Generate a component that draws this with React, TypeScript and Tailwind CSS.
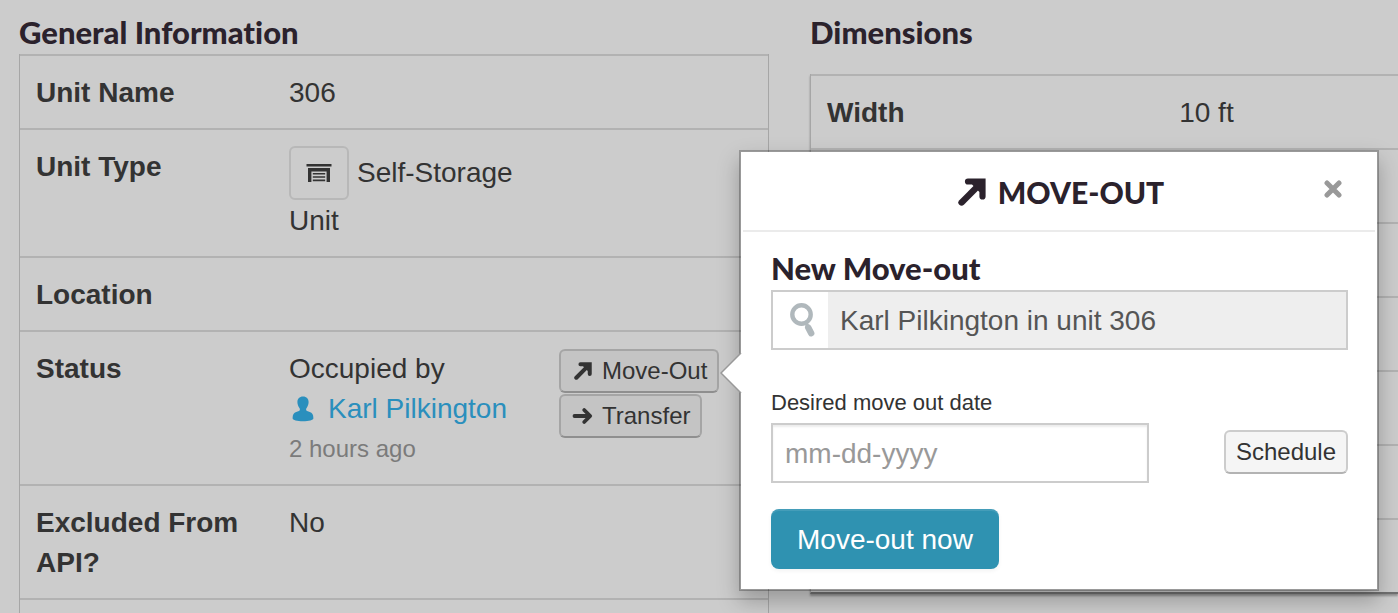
import type { ReactNode } from "react";
import { clsx } from "clsx";

/* Icons */

function ArrowUpRight({ className }: { className?: string }) {
  return (
    <svg viewBox="0 0 28 28" className={className} fill="currentColor" aria-hidden="true">
      <path
        d="M3.600 24.400 L20 8"
        stroke="currentColor"
        strokeWidth="6.400"
        strokeLinecap="round"
        fill="none"
      />
      <path d="M10 .4 H27.600 V18.500 a3.100 3.100 0 0 1 -6.200 0 V14 L14 6.600 H10 a3.100 3.100 0 0 1 0 -6.200z" />
    </svg>
  );
}

function ArrowRight({ className }: { className?: string }) {
  return (
    <svg
      viewBox="0 0 24 24"
      className={className}
      fill="none"
      stroke="currentColor"
      strokeWidth="3.8"
      strokeLinecap="round"
      strokeLinejoin="round"
      aria-hidden="true"
    >
      <path d="M3.500 12 H18 M13.200 6 L19.200 12 L13.200 18" />
    </svg>
  );
}

function UserIcon({ className }: { className?: string }) {
  return (
    <svg viewBox="0 0 22 26" className={className} fill="currentColor" aria-hidden="true">
      <path d="M11 .5c3.600 0 5.600 2.300 5.600 5.600 0 2.600-.9 4.400-2 5.800-.7.900-.8 2.600.5 3.100l2.700.9c2.300.8 3.600 2.600 3.600 6.300 0 1.800-4.600 3-10.400 3S.6 24 .6 22.200c0-3.700 1.300-5.500 3.600-6.300l2.700-.9c1.300-.5 1.200-2.200.5-3.100-1.100-1.400-2-3.200-2-5.800C5.400 2.800 7.400.5 11 .5z" />
    </svg>
  );
}

function GarageIcon({ className }: { className?: string }) {
  return (
    <svg viewBox="0 0 26 20" className={className} fill="currentColor" aria-hidden="true">
      <path d="M.5 1h25v2.500H.5z" />
      <path d="M2 5h22v14h-3.400V8.500H5.400V19H2z" />
      <path d="M6.800 10h12.400v1.600H6.800zM6.800 13.200h12.400v1.600H6.800zM6.800 16.600h12.400v1.600H6.800z" />
    </svg>
  );
}

function SearchIcon({ className }: { className?: string }) {
  return (
    <svg
      viewBox="0 0 26 34"
      className={className}
      fill="none"
      stroke="currentColor"
      strokeLinecap="round"
      aria-hidden="true"
    >
      <circle cx="11.500" cy="11.500" r="9.200" strokeWidth="4.400" />
      <path d="M18.200 24.500 L21.200 30.200" strokeWidth="6.400" />
      <path d="M16 20 L18 24" strokeWidth="3.400" />
    </svg>
  );
}

function CloseIcon({ className }: { className?: string }) {
  return (
    <svg
      viewBox="0 0 18 18"
      className={className}
      stroke="currentColor"
      strokeWidth="5"
      strokeLinecap="round"
      aria-hidden="true"
    >
      <path d="M3 3 L15 15 M15 3 L3 15" />
    </svg>
  );
}

/* Building blocks */

const headingFont =
  "font-['Lato',sans-serif] font-black text-[#2b222c] [font-variant-ligatures:none]";
const cell = "border-t-2 border-[#b2b2b2] px-4 pt-[17px] pb-[15px]";

interface SmallButtonProps {
  children: ReactNode;
  dimmed?: boolean;
}

function SmallButton({ children, dimmed }: SmallButtonProps) {
  return (
    <button
      type="button"
      className={clsx(
        "inline-flex h-11 items-center gap-[7px] rounded-md border-2 px-2.5 text-2xl leading-none whitespace-nowrap text-[#333]",
        dimmed
          ? "border-[#a5a5a5] border-b-[#8f8f8f] bg-[#c4c4c4]"
          : "border-[#ccc] border-b-[#b3b3b3] bg-[#f5f5f5]"
      )}
    >
      {children}
    </button>
  );
}

interface RowProps {
  label: string;
  children?: ReactNode;
  actions?: ReactNode;
}

function InfoRow({ label, children, actions }: RowProps) {
  return (
    <tr className="align-top">
      <th scope="row" className={clsx(cell, "text-left font-bold")}>
        {label}
      </th>
      <td className={cell}>{children}</td>
      <td className={cell}>{actions}</td>
    </tr>
  );
}

function MoveOutPopover() {
  return (
    <div
      role="dialog"
      aria-labelledby="move-out-title"
      className="absolute -top-[199px] left-[180px] z-10 w-[640px] border-2 border-black/25 bg-white bg-clip-padding px-0.5 shadow-[0_10px_20px_rgba(0,0,0,0.25)]"
    >
      {/* Pointer towards the button */}
      <svg
        viewBox="0 0 22 42"
        className="absolute top-[200px] -left-[21px] h-[42px] w-[22px]"
        aria-hidden="true"
      >
        <path d="M22 0 L1 21 L22 42z" fill="#fff" />
        <path d="M21 1 L1 21 L21 41" fill="none" stroke="#999" strokeWidth="1.500" />
      </svg>

      <div className="relative flex h-20 items-center justify-center gap-3 border-b-2 border-[#ebebeb] pt-px pl-1">
        <ArrowUpRight className="h-7 w-7 text-[#2b222c]" />
        <h2 id="move-out-title" className={clsx(headingFont, "text-3xl leading-10")}>
          MOVE-OUT
        </h2>
        <button type="button" aria-label="Close" className="absolute top-7 right-[33px] text-[#999]">
          <CloseIcon className="h-[18px] w-[18px]" />
        </button>
      </div>

      <form className="pt-4 pr-[27px] pb-5 pl-7">
        <h3 className={clsx(headingFont, "pb-0.5 text-[31px] leading-10")}>New Move-out</h3>
        <div className="flex h-[60px] border-2 border-[#ccc] bg-[#eee]">
          <div className="flex w-[55px] items-center justify-center bg-white pl-1">
            <SearchIcon className="h-[34px] w-[26px] text-[#b0b8bc]" />
          </div>
          <input
            type="text"
            readOnly
            aria-label="Lease"
            defaultValue="Karl Pilkington in unit 306"
            className="min-w-0 flex-1 bg-transparent px-3 pt-0.5 text-[#555] outline-none"
          />
        </div>

        <label htmlFor="move-out-date" className="mt-[37px] block text-[22px] leading-8">
          Desired move out date
        </label>
        <div className="mt-1 flex items-start justify-between">
          <input
            id="move-out-date"
            type="text"
            placeholder="mm-dd-yyyy"
            className="h-[60px] w-[378px] border-2 border-[#ccc] bg-white px-3 pt-0.5 shadow-[inset_0_2px_2px_rgba(0,0,0,0.075)] outline-none placeholder:text-[#999]"
          />
          <div className="flex pt-[7px]">
            <SmallButton>Schedule</SmallButton>
          </div>
        </div>

        <button
          type="button"
          className="mt-[26px] block h-[60px] rounded-lg bg-[#2f92b1] px-[26px] pt-0.5 text-white shadow-[inset_0_2px_0_rgba(255,255,255,0.1),0_2px_4px_rgba(0,0,0,0.05)]"
        >
          Move-out now
        </button>
      </form>
    </div>
  );
}

function GeneralInformation() {
  return (
    <section>
      <h2 className={clsx(headingFont, "pt-3 pb-0.5 text-[31px] leading-10")}>
        General Information
      </h2>
      <table className="w-full table-fixed border-separate border-spacing-0 border-x border-[#a6a6a6]">
        <colgroup>
          <col className="w-[253px]" />
          <col className="w-[270px]" />
          <col />
        </colgroup>
        <tbody>
          <InfoRow label="Unit Name">306</InfoRow>
          <InfoRow label="Unit Type">
            <span className="-mt-px mr-2 mb-px inline-flex h-[54px] w-[60px] items-center justify-center rounded-md border-2 border-[#b8b8b8] align-[-1px]">
              <GarageIcon className="h-5 w-[26px]" />
            </span>
            Self-Storage Unit
          </InfoRow>
          <InfoRow label="Location" />
          <InfoRow
            label="Status"
            actions={
              <div className="relative flex flex-col items-start gap-px">
                <SmallButton dimmed>
                  <span className="flex w-6 justify-center">
                    <ArrowUpRight className="h-[18px] w-[18px]" />
                  </span>
                  Move-Out
                </SmallButton>
                <SmallButton dimmed>
                  <ArrowRight className="h-6 w-6" />
                  Transfer
                </SmallButton>
                <MoveOutPopover />
              </div>
            }
          >
            <div>Occupied by</div>
            <a href="#karl-pilkington" className="flex items-center text-[#2a8fbd]">
              <UserIcon className="mr-3.5 ml-[3px] h-[26px] w-[22px]" />
              Karl Pilkington
            </a>
            <div className="text-2xl leading-10 text-[#7b7b7b]">2 hours ago</div>
          </InfoRow>
          <InfoRow label="Excluded From API?">No</InfoRow>
          <InfoRow label="" />
        </tbody>
      </table>
    </section>
  );
}

const dimensions = [
  { label: "Width", value: "10 ft" },
  { label: "", value: "" },
  { label: "", value: "" },
  { label: "", value: "" },
  { label: "", value: "" },
  { label: "", value: "" },
  { label: "", value: "" },
];

function Dimensions() {
  return (
    <section>
      <h2 className={clsx(headingFont, "pt-3 pb-0.5 text-[31px] leading-10")}>Dimensions</h2>
      <table className="mt-5 w-full table-fixed border-separate border-spacing-0 border-b-2 border-l border-b-[#707070] border-l-[#a6a6a6] shadow-[0_2px_2px_rgba(0,0,0,0.3)]">
        <tbody>
          {dimensions.map((d, i) => (
            <tr key={i} className="h-[74px] align-top">
              <th scope="row" className={clsx(cell, "w-[60%] text-left font-bold")}>
                {d.label}
              </th>
              <td className={cell}>{d.value}</td>
            </tr>
          ))}
        </tbody>
      </table>
    </section>
  );
}

export default function App() {
  return (
    <main className="grid h-screen grid-cols-[750fr_588fr] items-start gap-[41px] overflow-hidden bg-[#ccc] pl-[19px] font-['Liberation_Sans',Arial,sans-serif] text-[28px] leading-10 text-[#333]">
      <GeneralInformation />
      <Dimensions />
    </main>
  );
}
